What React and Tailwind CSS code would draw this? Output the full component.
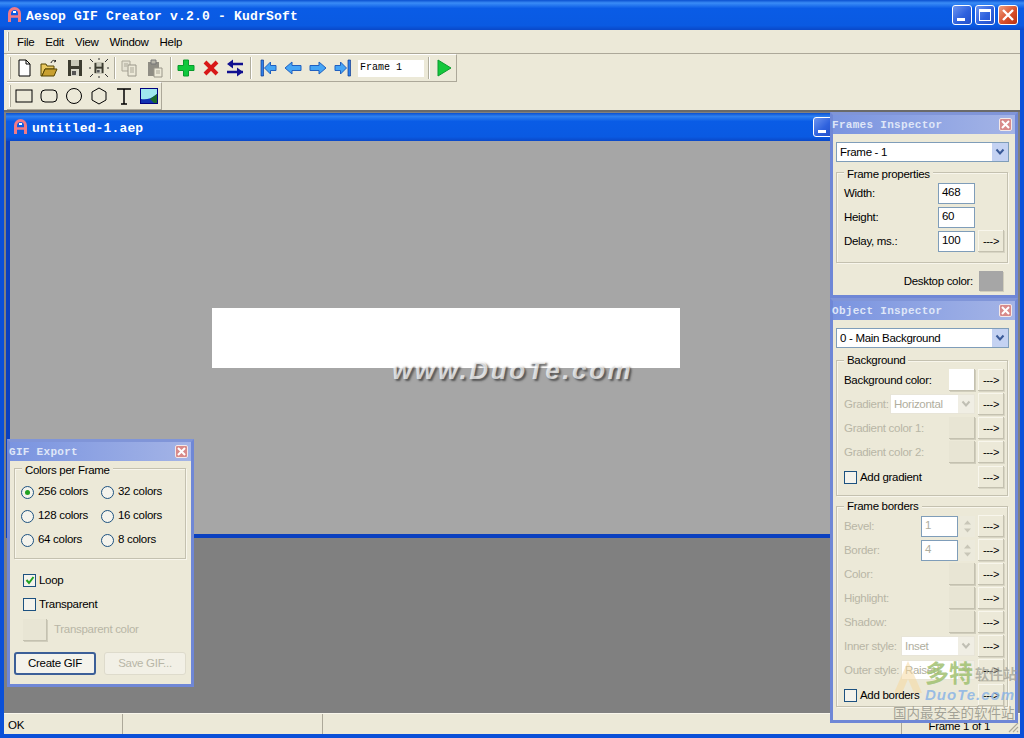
const UI = { fontFamily: '"Liberation Sans", Arial, sans-serif' };

function AIcon() {
  return (
    <svg width="13" height="16" viewBox="0 0 13 16" className="shrink-0">
      <path d="M1.500 15V6.500a5 5 0 0 1 10 0V15" fill="none" stroke="#f07a86" strokeWidth="3" />
      <path d="M2 9.500h9" stroke="#f07a86" strokeWidth="2.500" />
      <path d="M5 5h3" stroke="#ffffff" strokeWidth="2" />
    </svg>
  );
}

function WinBtn({ kind }) {
  const bg = kind === 'close'
    ? 'bg-[linear-gradient(135deg,#f0a080,#d8502c_55%,#b83010)]'
    : 'bg-[linear-gradient(135deg,#6d94ef,#2f62de_55%,#2450c8)]';
  return (
    <div className={`w-[20px] h-[20px] rounded-[3px] border border-white flex items-center justify-center shrink-0 ${bg}`}>
      {kind === 'min' && <div className="w-[8px] h-[3px] bg-white mt-[8px] mr-[2px]" />}
      {kind === 'max' && <div className="w-[12px] h-[12px] border border-white border-t-[3px]" />}
      {kind === 'close' && (
        <svg width="14" height="14" viewBox="0 0 14 14"><path d="M2 2l10 10M12 2L2 12" stroke="#fff" strokeWidth="2.400" /></svg>
      )}
    </div>
  );
}

function Grip() {
  return <div className="w-[2px] self-stretch my-[2px] border-l border-r border-l-white border-r-[#b0ad9d] shrink-0" />;
}
function Sep({ className = 'mx-[3px]' }) {
  return <div className={`w-[2px] h-[22px] border-l border-r border-l-[#b0ad9d] border-r-white shrink-0 ${className}`} />;
}

const IconBox = ({ children, w = 25 }) => (
  <div className="h-[24px] flex items-center justify-center shrink-0" style={{ width: w }}>
    <svg width="20" height="20" viewBox="0 0 20 20">{children}</svg>
  </div>
);

const Floppy = ({ x = 0, y = 0, s = 1, c = '#3c3c30' }) => (
  <g transform={`translate(${x} ${y}) scale(${s})`}>
    <path d="M3 2h14v16H3z" fill={c} />
    <path d="M6 2h8v6H6z" fill="#c8c8b8" />
    <path d="M6 11h8v7H6z" fill="#d8d8cc" />
    <path d="M7 13h4v4H7z" fill="#555" />
  </g>
);

function MainToolbar() {
  return (
    <div className="h-[28px] w-[450px] flex items-center pl-[2px] border-b border-r border-b-[#aca899] border-r-[#aca899] border-t border-t-white">
      <Grip />
      <IconBox>
        <path d="M5 2h7l4 4v12H5z" fill="#fff" stroke="#000" />
        <path d="M12 2v4h4" fill="none" stroke="#000" />
      </IconBox>
      <IconBox>
        <path d="M2 6h5l1 2h7v3H6l-3 7H2z" fill="#e8c860" stroke="#554400" />
        <path d="M3 18l3-7h12l-3 7z" fill="#c8a030" stroke="#554400" />
        <path d="M12 5c1-3 3-3 5-2l-1-1m1 1l-2 1" fill="none" stroke="#222" />
      </IconBox>
      <IconBox><Floppy x={1} y={0} /></IconBox>
      <IconBox>
        <Floppy x={3.5} y={3.5} s={0.65} />
        <path d="M1 1l3 3M19 1l-3 3M1 19l3-3M19 19l-3-3M10 0v2M10 18v2M0 10h2M18 10h2" stroke="#333" />
      </IconBox>
      <Sep className="ml-[3px] mr-[2px]" />
      <IconBox w={24}>
        <path d="M2 3h8v10H2z" fill="#e4e1d2" stroke="#aaa798" />
        <path d="M8 7h8v11H8z" fill="#ece9d8" stroke="#9a978a" />
        <path d="M10 10h4M10 12h4M10 14h4M4 6h4M4 8h3" stroke="#aaa798" />
      </IconBox>
      <IconBox w={26}>
        <path d="M3 4h11v14H3z" fill="#8f8d84" />
        <path d="M6 2h5v4H6z" fill="#b8b6aa" stroke="#777" />
        <path d="M9 10h8v9H9z" fill="#ece9d8" stroke="#9a978a" />
        <path d="M11 13h4M11 15h4" stroke="#aaa798" />
      </IconBox>
      <Sep className="mx-[2px]" />
      <IconBox w={24}>
        <path d="M7.500 2h5v5.500h5.500v5h-5.500v5.500h-5v-5.500H2v-5h5.500z" fill="#0fc83c" stroke="#089a2c" />
      </IconBox>
      <IconBox w={25}>
        <path d="M4 4l6 6 6-6M4 16l6-6 6 6" fill="none" stroke="#d81818" strokeWidth="4" />
      </IconBox>
      <IconBox w={24}>
        <path d="M18 6H6M18 14H2" stroke="#101090" strokeWidth="2.500" fill="none" />
        <path d="M8 1.500L2 6l6 4.500zM12 9.500l6 4.500-6 4.500z" fill="#101090" />
      </IconBox>
      <Sep className="mx-[3px]" />
      <IconBox w={25}>
        <path d="M3 2h2.500v16H3z" fill="#2f80e8" stroke="#103a90" strokeWidth=".7" />
        <path d="M6.500 10l6-6v3.500H18v5h-5.500V16z" fill="#45a5f5" stroke="#2060c0" />
      </IconBox>
      <IconBox w={25}>
        <path d="M2 10l7-6v3.500h9v5H9V16z" fill="#45a5f5" stroke="#2060c0" />
      </IconBox>
      <IconBox w={25}>
        <path d="M18 10l-7-6v3.500H2v5h9V16z" fill="#45a5f5" stroke="#2060c0" />
      </IconBox>
      <IconBox w={26}>
        <path d="M15 2h2.500v16H15z" fill="#2f80e8" stroke="#103a90" strokeWidth=".7" />
        <path d="M13.500 10l-6-6v3.500H2v5h5.500V16z" fill="#45a5f5" stroke="#2060c0" />
      </IconBox>
      <div className="w-[66px] h-[17px] ml-[2px] bg-white flex items-center pl-[2px] text-[10px] tracking-normal leading-none font-['Liberation_Mono'] text-black shrink-0">Frame 1</div>
      <Sep className="ml-[4px] mr-[2px]" />
      <IconBox w={24}>
        <path d="M4 2l13 8-13 8z" fill="#14c83c" stroke="#0d9a30" />
      </IconBox>
    </div>
  );
}

function ShapeToolbar() {
  return (
    <div className="h-[28px] w-[155px] flex items-center pl-[2px] border-r border-b border-b-[#aca899] border-r-[#aca899] border-t border-t-white">
      <Grip />
      <IconBox w={25}><rect x="2" y="4" width="16" height="12" fill="none" stroke="#000" /></IconBox>
      <IconBox w={25}><rect x="2" y="4" width="16" height="12" rx="4" fill="none" stroke="#000" /></IconBox>
      <IconBox w={25}><circle cx="10" cy="10" r="7.500" fill="none" stroke="#000" /></IconBox>
      <IconBox w={25}><path d="M10 2l7 4v8l-7 4-7-4V6z" fill="none" stroke="#000" /></IconBox>
      <IconBox w={25}><path d="M3 3h14M10 3v15M7 18h6" fill="none" stroke="#000" strokeWidth="1.500" /></IconBox>
      <IconBox w={25}>
        <rect x="1.500" y="2.500" width="17" height="15" fill="#9fe8ee" stroke="#000080" />
        <path d="M2 13c5 1 10 0 16-5v9H2z" fill="#1030b0" />
        <path d="M11 13l7-5v9h-3z" fill="#1a6a2a" />
      </IconBox>
    </div>
  );
}

const BTN3D = 'bg-[#ece9d8] shadow-[inset_-1px_-1px_0_#c4c1b0,inset_1px_1px_0_#f8f6ec,1px_1px_0_#d8d5c4]';
const TXT = 'text-[11.5px] tracking-[-0.3px]';

function Arrow() {
  return <div className={`w-[26px] h-[22px] ml-[3px] text-[11px] tracking-[-0.3px] flex items-center justify-center text-black shrink-0 ${BTN3D}`}>---&gt;</div>;
}
function Swatch({ white, w = 26 }) {
  const c = white ? 'bg-white' : 'bg-[#e8e5d4]';
  return <div className={`h-[22px] shrink-0 ${c} shadow-[inset_-1px_-1px_0_#c4c1b0,1px_1px_0_#d0cdbc]`} style={{ width: w }} />;
}
function Input({ value, w = 37, disabled }) {
  return (
    <div className={`h-[21px] bg-white border border-[#7f9db9] pl-[3px] flex items-center shrink-0 ${TXT} ${disabled ? 'text-[#b0ae9e]' : 'text-black'}`} style={{ width: w }}>{value}</div>
  );
}
function Combo({ value, w, disabled }) {
  return (
    <div className={`h-[20px] bg-white border ${disabled ? 'border-[#e8e5d8]' : 'border-[#7f9db9]'} flex items-center justify-between pl-[3px] shrink-0 ${TXT} ${disabled ? 'text-[#b0ae9e]' : 'text-black'}`} style={{ width: w }}>
      <span className="block pt-[2px]">{value}</span>
      <div className={`w-[16px] h-[18px] flex items-center justify-center ${disabled ? 'bg-[#f0eee4]' : 'bg-[#c4d2f2]'}`}>
        <svg width="10" height="8" viewBox="0 0 10 8"><path d="M1.500 1.500L5 5.500l3.500-4" fill="none" stroke={disabled ? '#c0bfb4' : '#3a5a98'} strokeWidth="2" /></svg>
      </div>
    </div>
  );
}
function Spinner() {
  return (
    <div className="w-[15px] h-[21px] ml-[2px] shrink-0 flex flex-col items-center justify-center gap-[3px] bg-[#eceadc]">
      <svg width="9" height="5" viewBox="0 0 9 5"><path d="M1 4.500l3.500-4 3.500 4z" fill="#c8c6b8" /></svg>
      <svg width="9" height="5" viewBox="0 0 9 5"><path d="M1 .5l3.500 4 3.500-4z" fill="#c8c6b8" /></svg>
    </div>
  );
}
function Check({ checked }) {
  return (
    <div className="w-[13px] h-[13px] border border-[#1c5180] bg-[#f4f3ec] flex items-center justify-center shrink-0">
      {checked && <svg width="10" height="10" viewBox="0 0 10 10"><path d="M1.500 5l2.500 3 4.500-6" fill="none" stroke="#21a121" strokeWidth="2" /></svg>}
    </div>
  );
}
function CheckRow({ checked, label }) {
  return (
    <div className={`h-[24px] flex items-center gap-[3px] ${TXT}`}><Check checked={checked} /><span className="block pt-[2px]">{label}</span></div>
  );
}
function Radio({ checked, label }) {
  return (
    <div className={`flex items-center h-[24px] gap-[4px] ${TXT}`}>
      <div className="w-[13px] h-[13px] rounded-full border border-[#1c5180] bg-[#f4f3ec] flex items-center justify-center shrink-0">
        {checked && <div className="w-[5px] h-[5px] rounded-full bg-[#21a121]" />}
      </div>
      <span>{label}</span>
    </div>
  );
}
function Group({ title, className, legendTop = '-top-[8px]', children }) {
  return (
    <div className={`relative border border-[#c4c1b0] shadow-[inset_1px_1px_0_#f8f6ec,1px_1px_0_#f8f6ec] ${className}`}>
      <span className={`absolute left-[7px] bg-[#ece9d8] px-[3px] leading-[14px] text-black ${TXT} ${legendTop}`}>{title}</span>
      {children}
    </div>
  );
}
function Row({ label, disabled, children }) {
  return (
    <div className="h-[24px] flex items-center justify-between">
      <span className={`block pt-[2px] whitespace-nowrap ${TXT} ${disabled ? 'text-[#b8b6a6]' : 'text-black'}`}>{label}</span>
      <div className="flex items-center">{children}</div>
    </div>
  );
}

function Palette({ title, className, children }) {
  return (
    <div className={`absolute bg-[#ece9d8] border-[3px] border-[#6f87d6] border-t-[#8095d8] ${className}`} style={UI}>
      <div className="h-[19px] flex items-center justify-between pr-[3px] bg-[linear-gradient(90deg,#7a94e0,#a4b4e6)]">
        <span className="-ml-[1px] mt-[2px] text-[11px] leading-none tracking-[0.3px] font-bold text-[#dfe6f8] font-['Liberation_Mono']">{title}</span>
        <div className="w-[13px] h-[13px] rounded-[2px] bg-[#d88a8a] border border-[#f4e8e8] flex items-center justify-center">
          <svg width="9" height="9" viewBox="0 0 9 9"><path d="M1 1l7 7M8 1L1 8" stroke="#ffffff" strokeWidth="2" /></svg>
        </div>
      </div>
      {children}
    </div>
  );
}

function FramesInspector() {
  return (
    <Palette title="Frames Inspector" className="left-[830px] top-[112px] w-[188px] h-[186px]">
      <div className="px-[3px] pt-[8px]">
        <Combo value="Frame - 1" w={173} />
        <Group title="Frame properties" legendTop="-top-[6px]" className="mt-[10px] w-[172px] h-[91px] pl-[7px] pr-[3px] pt-[8px]">
          <Row label="Width:"><Input value="468" /><div className="w-[29px]" /></Row>
          <Row label="Height:"><Input value="60" /><div className="w-[29px]" /></Row>
          <Row label="Delay, ms.:"><Input value="100" /><Arrow /></Row>
        </Group>
        <div className={`flex items-center justify-end mt-[8px] pr-[9px] gap-[6px] h-[20px] ${TXT}`}>
          <span className="block pt-[2px]">Desktop color:</span>
          <div className="w-[24px] h-[20px] bg-[#a6a6a6] shadow-[1px_1px_0_#d0cdbc]" />
        </div>
      </div>
    </Palette>
  );
}

function ObjectInspector() {
  return (
    <Palette title="Object Inspector" className="left-[830px] top-[298px] w-[188px] h-[425px]">
      <div className="px-[3px] pt-[8px]">
        <Combo value="0 - Main Background" w={173} />
        <Group title="Background" className="mt-[12px] w-[172px] h-[136px] pl-[7px] pr-[3px] pt-[7px]">
          <Row label="Background color:"><Swatch white /><Arrow /></Row>
          <Row label="Gradient:" disabled><Combo value="Horizontal" w={85} disabled /><Arrow /></Row>
          <Row label="Gradient color 1:" disabled><Swatch /><Arrow /></Row>
          <Row label="Gradient color 2:" disabled><Swatch /><Arrow /></Row>
          <div className="h-[24px] mt-[1px] flex items-center justify-between">
            <CheckRow label="Add gradient" />
            <Arrow />
          </div>
        </Group>
        <Group title="Frame borders" className="mt-[10px] w-[172px] h-[201px] pl-[7px] pr-[3px] pt-[7px]">
          <Row label="Bevel:" disabled><Input value="1" w={37} disabled /><Spinner /><Arrow /></Row>
          <Row label="Border:" disabled><Input value="4" w={37} disabled /><Spinner /><Arrow /></Row>
          <Row label="Color:" disabled><Swatch /><Arrow /></Row>
          <Row label="Highlight:" disabled><Swatch /><Arrow /></Row>
          <Row label="Shadow:" disabled><Swatch /><Arrow /></Row>
          <Row label="Inner style:" disabled><Combo value="Inset" w={74} disabled /><Arrow /></Row>
          <Row label="Outer style:" disabled><Combo value="Raised" w={74} disabled /><Arrow /></Row>
          <div className="h-[24px] mt-[1px] flex items-center justify-between">
            <CheckRow label="Add borders" />
            <Arrow />
          </div>
        </Group>
      </div>
    </Palette>
  );
}

function GifExport() {
  return (
    <Palette title="GIF Export" className="left-[7px] top-[439px] w-[187px] h-[248px]">
      <div className="px-[4px] pt-[7px]">
        <Group title="Colors per Frame" legendTop="-top-[6px]" className="w-[172px] h-[91px] pl-[6px] pt-[11px]">
          <div className="grid grid-cols-[80px_1fr]">
            <Radio checked label="256 colors" />
            <Radio label="32 colors" />
            <Radio label="128 colors" />
            <Radio label="16 colors" />
            <Radio label="64 colors" />
            <Radio label="8 colors" />
          </div>
        </Group>
        <div className="pl-[9px] mt-[9px]">
          <CheckRow checked label="Loop" />
          <CheckRow label="Transparent" />
          <div className={`h-[24px] mt-[2px] flex items-center gap-[7px] text-[#b8b6a6] ${TXT}`}><Swatch w={24} /><span>Transparent color</span></div>
        </div>
        <div className="flex gap-[8px] mt-[10px]">
          <div className={`w-[82px] h-[23px] rounded-[3px] border-2 border-[#3c5f98] bg-[#f4f3ec] flex items-center justify-center ${TXT}`}>Create GIF</div>
          <div className={`w-[82px] h-[23px] rounded-[3px] border border-[#dedbcc] bg-[#f2f0e6] flex items-center justify-center text-[#b8b6a6] ${TXT}`}>Save GIF...</div>
        </div>
      </div>
    </Palette>
  );
}

function StatusCell({ w, children }) {
  return <div className={`h-full border-r border-r-[#aca899] flex items-center pt-[4px] ${TXT}`} style={{ width: w }}>{children}</div>;
}

export default function App() {
  return (
    <div className="relative w-[1024px] h-[738px] overflow-hidden bg-[#0a50d8] flex flex-col text-black" style={UI}>
      <div className="h-[30px] shrink-0 flex items-center pl-[8px] pr-[6px] bg-[linear-gradient(180deg,#0a50d0_0%,#3a8cf6_10%,#0a5ce6_28%,#0a5ae2_85%,#0a48c8_100%)]">
        <AIcon />
        <span className="ml-[5px] mt-[3px] text-[13px] font-bold tracking-[0.2px] text-white font-['Liberation_Mono'] whitespace-nowrap">Aesop GIF Creator v.2.0 - KudrSoft</span>
        <div className="ml-auto flex gap-[3px]"><WinBtn kind="min" /><WinBtn kind="max" /><WinBtn kind="close" /></div>
      </div>

      <div className="mx-[4px] flex-1 flex flex-col bg-[#ece9d8] min-h-0">
        <div className="h-[24px] shrink-0 flex items-center pl-[3px] border-b border-b-[#aca899]">
          <Grip />
          <div className={`flex items-center ml-[8px] gap-[11px] pt-[2px] ${TXT}`}>
            <span>File</span><span>Edit</span><span>View</span><span>Window</span><span>Help</span>
          </div>
        </div>
        <div className="pl-[3px] shrink-0"><MainToolbar /></div>
        <div className="pl-[3px] shrink-0"><ShapeToolbar /></div>

        <div className="flex-1 flex flex-col min-h-0 bg-[#808080] border-t-2 border-t-[#6a6a6a] pt-[1px]">
          <div className="w-[840px] ml-[2px] h-[425px] shrink-0 flex flex-col bg-[#0a5ae2] border-l-4 border-b-4 border-[#0a40c0]">
            <div className="h-[28px] shrink-0 -ml-[4px] flex items-center pl-[8px] pr-[13px] bg-[linear-gradient(180deg,#0a50d0_0%,#2f80f0_12%,#0a5ce6_30%,#0a5ae2_85%,#0a48c8_100%)]">
              <AIcon />
              <span className="ml-[5px] mt-[4px] text-[13px] font-bold tracking-[0.15px] text-white font-['Liberation_Mono']">untitled-1.aep</span>
              <div className="ml-auto"><WinBtn kind="min" /></div>
            </div>
            <div className="flex-1 bg-[#a6a6a6] pl-[202px] pt-[167px]">
              <div className="w-[468px] h-[60px] bg-white" />
            </div>
          </div>
        </div>

        <div className="relative h-[21px] shrink-0 flex items-center border-t border-t-[#f8f6ec] pl-[4px]">
          <StatusCell w={115}>OK</StatusCell>
          <StatusCell w={200} />
          <StatusCell w={579} />
          <div className={`flex-1 h-full flex items-center justify-end pr-[30px] pt-[5px] ${TXT}`}>Frame 1 of 1</div>
          <svg width="12" height="12" viewBox="0 0 12 12" className="absolute right-[1px] bottom-[1px]">
            <path d="M11 2L2 11M11 6l-5 5M11 10l-1 1" stroke="#aca899" strokeWidth="1.200" />
          </svg>
        </div>
      </div>
      <div className="h-[4px] shrink-0" />

      <FramesInspector />
      <ObjectInspector />
      <GifExport />

      <div className="absolute left-[392px] top-[355px] text-[26px] leading-[30px] font-bold italic tracking-[2.6px] text-white/70 [text-shadow:2px_2px_2px_rgba(60,60,60,0.75)] whitespace-nowrap pointer-events-none">www.DuoTe.com</div>
      <div className="absolute left-[893px] top-[658px] w-[128px] h-[62px] pointer-events-none" style={{ fontFamily: '"Noto Sans CJK SC", "Liberation Sans", sans-serif' }}>
        <svg width="30" height="34" viewBox="0 0 30 34" className="absolute left-[0px] top-[2px]"><path d="M15 1L1 33h8l6-14 6 14h8z" fill="#f5d9a0" fillOpacity="0.55" /></svg>
        <span className="absolute left-[32px] top-[0px] text-[24px] leading-[28px] font-bold text-[#9fc070]/85 whitespace-nowrap">多特</span>
        <span className="absolute left-[82px] top-[6px] text-[14px] leading-[18px] font-bold text-[#9a9a90]/70 whitespace-nowrap">软件站</span>
        <span className="absolute left-[32px] top-[28px] text-[15px] leading-[18px] font-bold italic tracking-[1px] text-[#8ab4e6]/85 font-['Liberation_Sans'] whitespace-nowrap">DuoTe.com</span>
        <span className="absolute left-[0px] top-[46px] text-[13.5px] leading-[16px] text-[#8a8a80]/75 whitespace-nowrap">国内最安全的软件站</span>
      </div>
    </div>
  );
}
